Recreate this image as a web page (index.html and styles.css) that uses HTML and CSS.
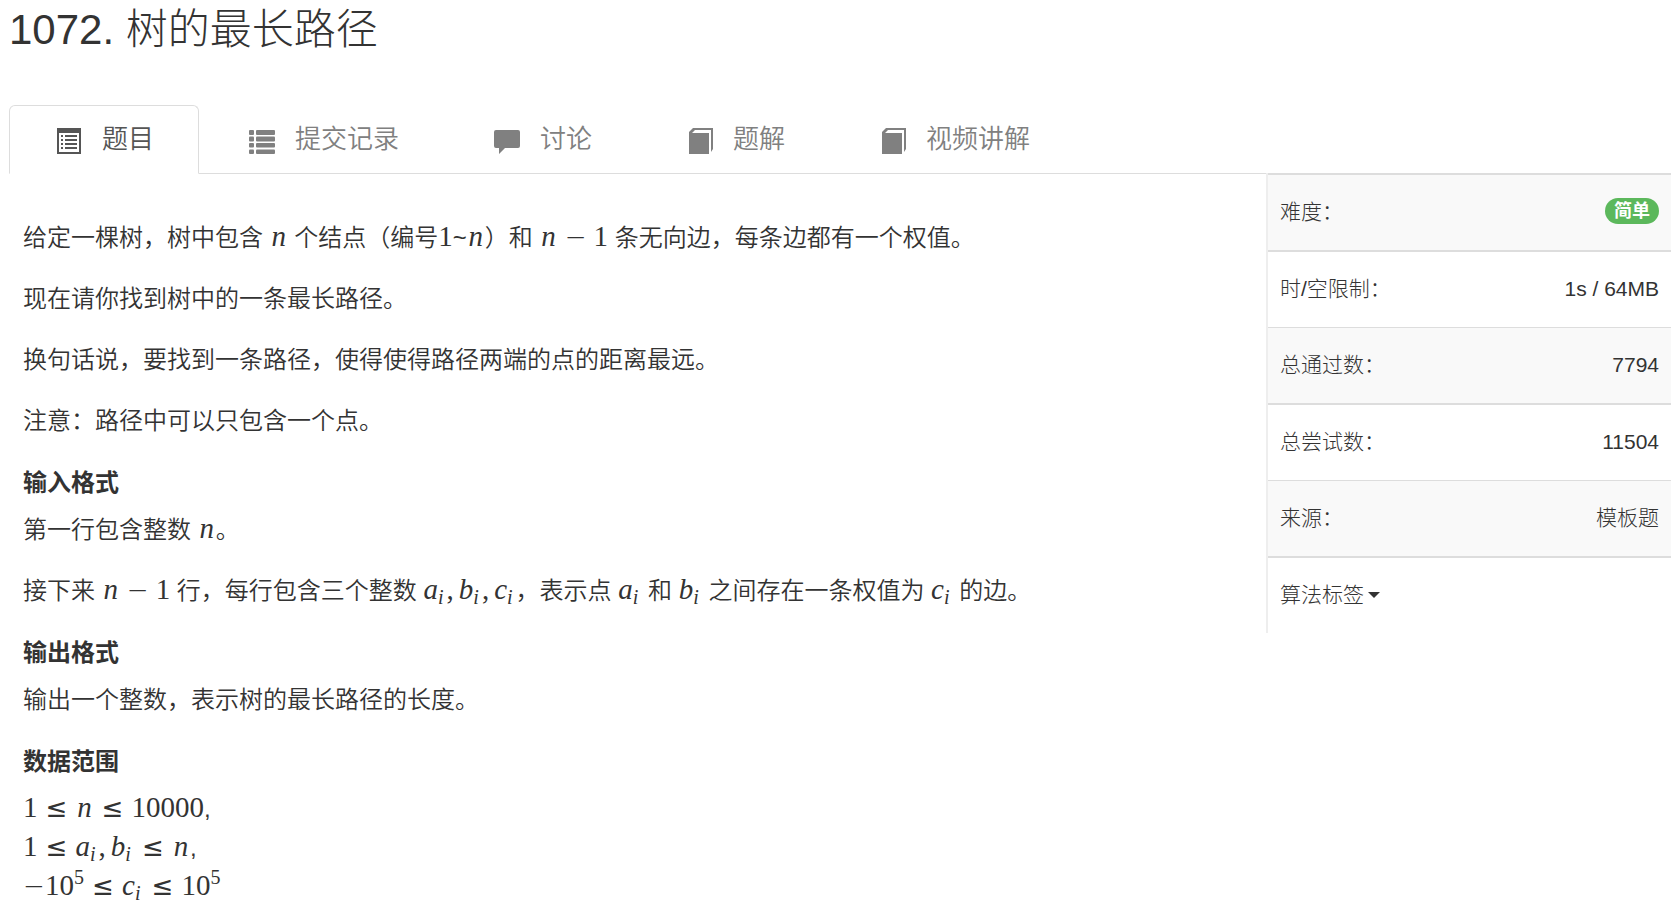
FILE: index.html
```html
<!DOCTYPE html>
<html lang="zh-CN">
<head>
    <meta charset="UTF-8">
    <meta name="viewport" content="width=device-width, initial-scale=1.0">
    <title>1072. 树的最长路径</title>
    <link rel="stylesheet" href="styles.css">
</head>
<body>

<h1 class="title">1072. 树的最长路径</h1>

<nav class="tabs">
    <a class="tab active" href="#problem">
        <svg class="icon" viewBox="0 0 26 26"><path fill-rule="evenodd" d="M1 0h24v26H1zM3 5v19h20V5z"/><path d="M5 7h2v2H5zM9 7h12v2H9zM5 11h2v2H5zM9 11h12v2H9zM5 15h2v2H5zM9 15h12v2H9zM5 19h2v2H5zM9 19h12v2H9z"/></svg>
        <span>题目</span>
    </a>
    <a class="tab" href="#submissions">
        <svg class="icon" viewBox="0 0 26 26"><rect x="0" y="2" width="5" height="5" rx="1"/><rect x="7" y="2" width="19" height="5" rx="1"/><rect x="0" y="8.500" width="5" height="5" rx="1"/><rect x="7" y="8.500" width="19" height="5" rx="1"/><rect x="0" y="15" width="5" height="4.500" rx="1"/><rect x="7" y="15" width="19" height="4.500" rx="1"/><rect x="0" y="21.500" width="5" height="4.500" rx="1"/><rect x="7" y="21.500" width="19" height="4.500" rx="1"/></svg>
        <span>提交记录</span>
    </a>
    <a class="tab" href="#discussion">
        <svg class="icon" viewBox="0 0 26 26"><path d="M2 2h22a2 2 0 0 1 2 2v14a2 2 0 0 1-2 2H11l-6 6v-6H2a2 2 0 0 1-2-2V4a2 2 0 0 1 2-2z"/></svg>
        <span>讨论</span>
    </a>
    <a class="tab" href="#solution">
        <svg class="icon" viewBox="0 0 26 26"><path d="M2 26V4l4-4h20v21l-2 3V2H8L5 5h17v21z"/></svg>
        <span>题解</span>
    </a>
    <a class="tab" href="#video">
        <svg class="icon" viewBox="0 0 26 26"><path d="M2 26V4l4-4h20v21l-2 3V2H8L5 5h17v21z"/></svg>
        <span>视频讲解</span>
    </a>
</nav>

<div class="content">
    <main class="problem" id="problem">
        <p>给定一棵树，树中包含 <span class="math"><i class="n">n</i></span> 个结点（编号<span class="math">1</span>~<span class="math"><i class="n">n</i></span>）和 <span class="math"><i class="n">n</i><span class="bin">−</span>1</span> 条无向边，每条边都有一个权值。</p>
        <p>现在请你找到树中的一条最长路径。</p>
        <p>换句话说，要找到一条路径，使得使得路径两端的点的距离最远。</p>
        <p>注意：路径中可以只包含一个点。</p>

        <h4>输入格式</h4>
        <p>第一行包含整数 <span class="math"><i class="n">n</i></span>。</p>
        <p>接下来 <span class="math"><i class="n">n</i><span class="bin">−</span>1</span> 行，每行包含三个整数 <span class="math"><i>a<sub>i</sub></i><span class="comma">,</span><i>b<sub>i</sub></i><span class="comma">,</span><i>c<sub>i</sub></i></span>，表示点 <span class="math"><i>a<sub>i</sub></i></span> 和 <span class="math"><i>b<sub>i</sub></i></span> 之间存在一条权值为 <span class="math"><i>c<sub>i</sub></i></span> 的边。</p>

        <h4>输出格式</h4>
        <p>输出一个整数，表示树的最长路径的长度。</p>

        <h4>数据范围</h4>
        <p>
            <span class="math">1<span class="rel">≤</span><i class="n">n</i><span class="rel">≤</span>10000</span>,<br>
            <span class="math">1<span class="rel">≤</span><i>a<sub>i</sub></i><span class="comma">,</span><i>b<sub>i</sub></i><span class="rel">≤</span><i class="n">n</i></span>,<br>
            <span class="math"><span class="sign">−</span>10<sup>5</sup><span class="rel">≤</span><i>c<sub>i</sub></i><span class="rel">≤</span>10<sup>5</sup></span>
        </p>
    </main>

    <aside class="side">
        <table class="info">
            <tr><td>难度：</td><td class="value"><span class="badge">简单</span></td></tr>
            <tr><td>时/空限制：</td><td class="value">1s / 64MB</td></tr>
            <tr><td>总通过数：</td><td class="value">7794</td></tr>
            <tr><td>总尝试数：</td><td class="value">11504</td></tr>
            <tr><td>来源：</td><td class="value">模板题</td></tr>
            <tr><td colspan="2"><button class="tags" type="button">算法标签<span class="caret"></span></button></td></tr>
        </table>
    </aside>
</div>

</body>
</html>
```
FILE: styles.css
```css
* {
    box-sizing: border-box;
}
body {
    margin: 0;
    padding: 0 9px;
    background: #fff;
    color: #333;
    font-family: "Liberation Sans", "Noto Sans CJK SC", sans-serif;
    font-size: 24px;
    font-weight: 350;
    line-height: 39px;
}
.title {
    margin: 0 0 45px;
    font-size: 42px;
    font-weight: 300;
    line-height: 60px;
}

/* Tabs */
.tabs {
    display: flex;
    gap: 3px;
    border-bottom: 1px solid #ddd;
}
.tab {
    display: flex;
    align-items: center;
    gap: 20px;
    margin-bottom: -1px;
    padding: 14px 44px 14px 46px;
    border: 1px solid transparent;
    border-radius: 6px 6px 0 0;
    color: #808080;
    font-size: 26px;
    text-decoration: none;
}
.tab.active {
    border-color: #ddd;
    border-bottom-color: #fff;
    background: #fff;
    color: #555;
}
.icon {
    width: 26px;
    height: 26px;
    margin-top: 2px;
    fill: currentColor;
}

.content {
    display: flex;
    align-items: flex-start;
}
.problem {
    flex: 1;
    padding: 44px 14px 0;
}
.problem p {
    margin: 0 0 22px;
}
.problem h4 {
    margin: 23px 0 8px;
    font-size: 24px;
    font-weight: bold;
}

/* Formulas */
.math {
    font-family: "Liberation Serif", serif;
    font-size: 29px;
    line-height: 1;
    white-space: nowrap;
}
.math .n {
    display: inline-block;
    width: 18px;
    text-align: center;
}
.math sub, .math sup {
    font-size: 20px;
    line-height: 0;
}
.math sub {
    margin-right: 3px;
    vertical-align: -5px;
}
.math sup {
    vertical-align: 11px;
}
.rel, .bin, .sign {
    display: inline-block;
    width: 22px;
    font-family: "DejaVu Sans", sans-serif;
    font-size: 26px;
    font-weight: 200;
    text-align: center;
}
.rel {
    margin: 0 8px;
    font-weight: 400;
}
.bin {
    margin: 0 7px;
}
.comma {
    margin-right: 5px;
}

/* Sidebar */
.side {
    flex: 0 0 405px;
    margin-top: -1px;
    border-left: 2px solid #eee;
}
.info {
    width: 100%;
    border-collapse: separate;
    border-spacing: 0;
    font-size: 21px;
    font-weight: 300;
    line-height: 27px;
}
.info td {
    padding: 23px 12px 25px;
    border-top: 2px solid #ddd;
}
.info tr:nth-child(odd) td {
    background: #f9f9f9;
}
.info tr:nth-child(3) td, .info tr:nth-child(5) td {
    border-top-width: 1px;
}
.info .value {
    text-align: right;
}
.badge {
    display: inline-block;
    padding: 0 9px;
    border-radius: 14px;
    background: #5cb85c;
    color: #fff;
    font-size: 18px;
    font-weight: bold;
    line-height: 26px;
    vertical-align: top;
}
.tags {
    display: flex;
    align-items: center;
    gap: 4px;
    padding: 0;
    border: 0;
    background: none;
    color: inherit;
    font: inherit;
    cursor: pointer;
}
.caret {
    border-top: 6px solid #333;
    border-left: 6px solid transparent;
    border-right: 6px solid transparent;
}
```
